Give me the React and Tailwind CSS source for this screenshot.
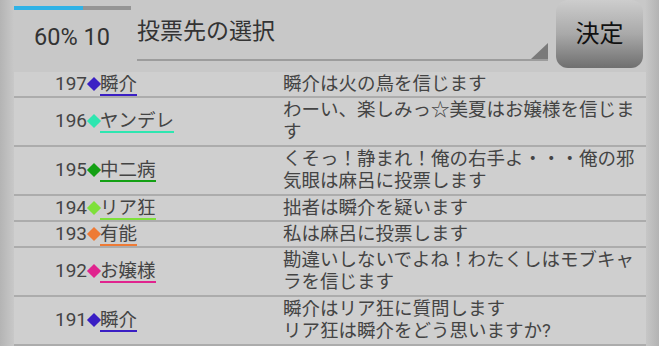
const rows = [
  { no: 197, name: "瞬介", color: "#3a1fc4", msg: "瞬介は火の鳥を信じます" },
  { no: 196, name: "ヤンデレ", color: "#2ee6b0", msg: "わーい、楽しみっ☆美夏はお嬢様を信じます", tall: true },
  { no: 195, name: "中二病", color: "#14a014", msg: "くそっ！静まれ！俺の右手よ・・・俺の邪気眼は麻呂に投票します", tall: true },
  { no: 194, name: "リア狂", color: "#7ee03a", msg: "拙者は瞬介を疑います" },
  { no: 193, name: "有能", color: "#ee7a35", msg: "私は麻呂に投票します" },
  { no: 192, name: "お嬢様", color: "#e0248e", msg: "勘違いしないでよね！わたくしはモブキャラを信じます", tall: true },
  { no: 191, name: "瞬介", color: "#3a1fc4", msg: "瞬介はリア狂に質問します\nリア狂は瞬介をどう思いますか?", tall: true },
];

function Row({ no, name, color, msg, tall }) {
  return (
    <div className={`flex items-center border-b-2 border-[#acacac] pt-[1px] ${tall ? "pb-[2px]" : "pb-[1px]"}`}>
      {/* left — number, marker, name */}
      <div className="w-[269px] shrink-0 flex items-center pl-[41px] h-[22px]">
        <span className="text-[19px] leading-[22px] text-[#444]">{no}</span>
        <span className="w-[13px] flex justify-center">
          <span className="w-[10px] h-[10px] rotate-45" style={{ background: color }} />
        </span>
        <span className="text-[18.5px] leading-[20px] text-[#444] border-b-2 mt-[2px]" style={{ borderColor: color }}>
          {name}
        </span>
      </div>
      {/* right — message */}
      <div className="w-[355px] text-[18.5px] leading-[22px] text-[#444] whitespace-pre-line">
        {msg}
      </div>
    </div>
  );
}

export default function App() {
  return (
    <div
      className="w-[659px] h-[346px] overflow-hidden flex flex-col bg-[linear-gradient(to_right,#b4b4b4_0px,#c8c8c8_14px,#c8c8c8_645px,#b3b3b3_659px)]"
      style={{ fontFamily: "Roboto, 'Noto Sans CJK JP', sans-serif" }}
    >
      {/* header */}
      <div className="h-[72px] shrink-0 flex">
        <div className="w-[137px] shrink-0 flex flex-col">
          <div className="ml-[14px] mt-[6px] w-[117px] h-[4px] bg-[#959595] flex">
            <div className="w-[69px] h-full bg-[#2fb2e6]" />
          </div>
          <div className="pl-[34px] mt-[12px] text-[23.5px] leading-[30px] text-[#333]">60% 10</div>
        </div>

        <div className="relative w-[411px] h-[61px] border-b-2 border-[#9c9c9c] pt-[17px]">
          <span className="text-[23px] leading-[30px] text-[#333]">投票先の選択</span>
          <span className="absolute right-0 bottom-0 w-[17px] h-[16px] bg-[#7a7a7a] [clip-path:polygon(100%_0,100%_100%,0_100%)]" />
        </div>

        <button className="ml-[8px] w-[87px] h-[68px] rounded-[12px] bg-[linear-gradient(to_bottom,#cdcdcd,#a9a9a9_50%,#6f6f6f)] text-[24px] text-[#111] flex items-center justify-center">
          決定
        </button>
      </div>

      {/* list */}
      <div className="ml-[14px] w-[632px] bg-[#cfcfcf] flex flex-col">
        {rows.map((r) => (
          <Row key={r.no} {...r} />
        ))}
      </div>
    </div>
  );
}
